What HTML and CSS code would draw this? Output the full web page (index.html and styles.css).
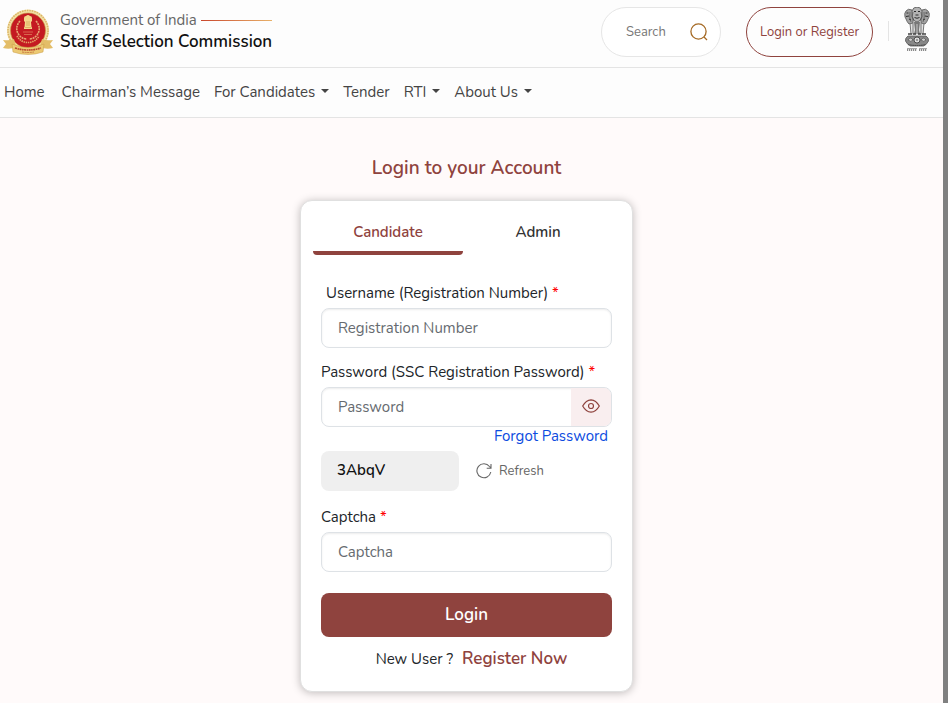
FILE: index.html
```html
<!DOCTYPE html>
<html lang="en">
<head>
<meta charset="utf-8">
<meta name="viewport" content="width=device-width, initial-scale=1">
<title>Staff Selection Commission</title>
<link rel="stylesheet" href="styles.css">
</head>
<body>
<header class="masthead">
  <a class="brand" href="#">
    <svg class="brand-logo" viewBox="0 0 50 46" aria-hidden="true">
      <circle cx="25" cy="21.500" r="21" fill="#f3dfa5"/>
      <circle cx="25" cy="21.500" r="20" fill="none" stroke="#d9b466" stroke-width="1.500" stroke-dasharray="1.500 1"/>
      <circle cx="25" cy="21.500" r="17.500" fill="#c41a22" stroke="#c99a45" stroke-width=".6"/>
      <path d="M14 27a12.500 12.500 0 0 0 22 0" fill="none" stroke="#e2a568" stroke-width="1.600" stroke-dasharray="1.400 .8"/>
      <path d="M17 12q-6 7-1 14 3 4 8 4M33 12q6 7 1 14-3 4-8 4" fill="none" stroke="#e6a874" stroke-width="1.600" stroke-dasharray="2 .7"/>
      <path d="M21 9q0-2 2-2 2-2 4 0 2 0 2 2v3l-1 1 .5 5H29v2h-8v-2h.500l.5-5-1-1z" fill="#f4d58a"/>
      <path d="M24 12v5M26 12v5M21.500 18.500h7" stroke="#cf964a" stroke-width=".6"/>
      <path d="M20 23h10M21 25.500h8" stroke="#dd7a58" stroke-width=".8"/>
      <path d="M0 31q7 1 11-1l2 8q-6 3-13 1l3-4zM50 31q-7 1-11-1l-2 8q6 3 13 1l-3-4z" fill="#e3bd68"/>
      <path d="M9 35q16 7 32 0l-1 8q-15 5-30 0z" fill="#ecca74" stroke="#c99a45" stroke-width=".5"/>
      <path d="M12 39q13 4 26 0" fill="none" stroke="#b8442c" stroke-width="1.600" stroke-dasharray="2 .6 1.500 .5"/>
      <path d="M19 43q6 1 12 0" fill="none" stroke="#c0683a" stroke-width=".8" stroke-dasharray="2 .6"/>
    </svg>
    <span class="brand-text">
      <span class="brand-gov">Government of India <span class="brand-rule"></span></span>
      <strong class="brand-name">Staff Selection Commission</strong>
    </span>
  </a>
  <div class="tools">
    <form class="search" role="search">
      <input class="search-input" type="search" placeholder="Search" aria-label="Search">
      <button class="search-button" type="submit" aria-label="Submit search">
        <svg viewBox="0 0 18 18" width="18" height="18" fill="none" stroke="#a56a25" stroke-width="1.300"><circle cx="8.500" cy="8.500" r="7.600"/><path d="M14 14l3 3"/></svg>
      </button>
    </form>
    <button class="account" type="button">Login or Register</button>
    <span class="divider"></span>
    <svg class="emblem" viewBox="0 0 26 45" role="img" aria-label="National emblem of India">
      <path d="M6 14h14l-1 14H7z" fill="#e2e2e2"/>
      <g fill="#a2a2a2" stroke="#555" stroke-width=".8">
        <path d="M8 3Q4 1 2 4 0 6 1 10l1 2q1 3 3 5l4-1V6zM18 3q4-2 6 1 2 2 1 6l-1 2q-1 3-3 5l-4-1V6z"/>
        <path d="M8 4q1-4 5-4t5 4v6q-2 5-5 5t-5-5z" fill="#b3b3b3"/>
      </g>
      <path d="M10 4.500h2m2 0h2M11.500 8h3M10.500 10.500q2.500 1.500 5 0M2.500 6h2m17 0h2M2 9.500l3-.5m16 0l3 .5M5 12l2 1m12 0l2-1" fill="none" stroke="#2c2c2c"/>
      <path d="M9 5q-2 4 1 9M17 5q2 4-1 9M6 5q-1 5 1 10M20 5q1 5-1 10" fill="none" stroke="#444" stroke-width=".6"/>
      <path d="M6 16l1 11M9 16v11M17 16v11M20 16l-1 11" stroke="#777"/>
      <path d="M10 15h6l-1 8 1 4h-6l1-4z" fill="#777"/>
      <path d="M13 17v10" stroke="#ddd" stroke-width=".8"/>
      <path d="M4 27h4m1 0h3m2 0h3m1 0h4" stroke="#444" stroke-width="1.400"/>
      <path d="M4 29h18q3 2 2.500 5-2 4-5 5h-13q-3-1-5-5Q1 31 4 29z" fill="#888" stroke="#555" stroke-width=".8"/>
      <circle cx="13" cy="33" r="3" fill="#ddd" stroke="#333" stroke-width=".8"/>
      <circle cx="13" cy="33" r=".8" fill="#444"/>
      <path d="M4 33q2-4 5 0-2 3-5 0M17 33q2-4 5 0-2 3-5 0" fill="#ccc" stroke="#555" stroke-width=".8"/>
      <path d="M4 37.500q9 2 18 0" fill="none" stroke="#444" stroke-dasharray="1.500 .7"/>
      <path d="M3 41.600h10m2 0h8" stroke="#888" stroke-width=".8"/>
      <path d="M3 43h10m2 0h8" stroke="#8a8a8a" stroke-width="2" stroke-dasharray="1.200 .8"/>
    </svg>
  </div>
</header>
<nav class="menu" aria-label="Main">
  <a class="menu-link menu-home" href="#">Home</a>
  <a class="menu-link" href="#">Chairman’s Message</a>
  <a class="menu-link menu-drop" href="#">For Candidates</a>
  <a class="menu-link" href="#">Tender</a>
  <a class="menu-link menu-drop" href="#">RTI</a>
  <a class="menu-link menu-drop" href="#">About Us</a>
</nav>
<main class="page">
  <h1 class="title">Login to your Account</h1>
  <section class="card">
    <div class="tabs" role="tablist">
      <button class="tab tab-active" type="button" role="tab" aria-selected="true">Candidate</button>
      <button class="tab" type="button" role="tab" aria-selected="false">Admin</button>
    </div>
    <form class="form">
      <label class="label label-inset" for="username">Username (Registration Number) <span class="required">*</span></label>
      <input class="input" id="username" type="text" placeholder="Registration Number">
      <label class="label" for="password">Password (SSC Registration Password) <span class="required">*</span></label>
      <div class="password">
        <input class="password-input" id="password" type="password" placeholder="Password">
        <button class="reveal" type="button" aria-label="Show password">
          <svg viewBox="0 0 18 14" width="18" height="14" fill="none" stroke="#8f433e" stroke-width="1.200"><path d="M.7 7Q4 1 9 .8 14 1 17.300 7 14 13 9 13.200 4 13 .7 7z"/><circle cx="9" cy="7" r="2.500"/></svg>
        </button>
      </div>
      <a class="forgot" href="#">Forgot Password</a>
      <div class="captcha">
        <span class="captcha-code">3AbqV</span>
        <button class="refresh" type="button">
          <svg viewBox="0 0 16 16" width="16" height="16" fill="none" stroke="#666" stroke-width="1.100"><path d="M14.800 9A7 7 0 1 1 13.500 3.500L15 5.200M15 1v4.300h-4.300"/></svg>
          Refresh
        </button>
      </div>
      <label class="label" for="captcha">Captcha <span class="required">*</span></label>
      <input class="input" id="captcha" type="text" placeholder="Captcha">
      <button class="submit" type="submit">Login</button>
      <p class="signup">New User ? <a class="signup-link" href="#">Register Now</a></p>
    </form>
  </section>
</main>
</body>
</html>
```
FILE: styles.css
```css
* { box-sizing: border-box; }

body {
  margin: 0;
  min-height: 100vh;
  border-right: 5px solid #808080;
  background: #fffafa;
  color: #212529;
  font: 15px/20px Nunito, Lato, sans-serif;
}

a { color: inherit; text-decoration: none; }
button, input { font: inherit; color: inherit; }
button { padding: 0; border: 0; background: none; cursor: pointer; }
svg { display: block; flex: none; }

.masthead {
  display: flex;
  justify-content: space-between;
  height: 68px;
  padding: 7px 13px 0 3px;
  border-bottom: 1px solid #e4e4e4;
  background: #fdfdfd;
}

.brand { display: flex; gap: 7px; }
.brand-logo { width: 50px; height: 46px; margin-top: 2px; }
.brand-text { display: flex; flex-direction: column; padding-top: 3px; }
.brand-gov { display: flex; gap: 4px; color: #666; }
.brand-rule { flex: 1; height: 1px; margin-top: 10px; background: linear-gradient(90deg, #c9472c, #e8b26a); }
.brand-name { color: #111; font-size: 17px; line-height: 24px; font-weight: 600; }

.tools { display: flex; align-items: flex-start; }
.search {
  display: flex;
  align-items: center;
  width: 120px;
  height: 50px;
  margin-right: 25px;
  padding: 0 12px 0 24px;
  border: 1px solid #e6e6e6;
  border-radius: 25px;
  background: #fff;
}
.search-input { flex: 1; min-width: 0; padding: 0; border: 0; outline: 0; background: none; font-size: 13px; }
.search-input::placeholder { color: #777; opacity: 1; }
.account {
  width: 127px;
  height: 50px;
  border: 1px solid #8f433e;
  border-radius: 25px;
  color: #8f433e;
  font-size: 13px;
}
.divider { width: 1px; height: 20px; margin: 14px 15px 0; background: #e4e4e4; }
.emblem { width: 26px; height: 45px; }

.menu {
  display: flex;
  align-items: center;
  gap: 14px;
  height: 50px;
  padding: 0 4px 1px;
  border-bottom: 1px solid #e4e4e4;
  background: #fdfdfd;
  color: #444;
}
.menu-home { margin-right: 3px; }
.menu-drop::after {
  content: "";
  display: inline-block;
  margin-left: 6px;
  vertical-align: 4px;
  border: 4px solid transparent;
  border-top-color: currentColor;
  border-bottom: 0;
}

.page { padding: 38px 10px 10px 0; }
.title { margin: 0 0 20px; color: #8f433e; font-size: 19px; line-height: 24px; font-weight: 600; text-align: center; }

.card {
  max-width: 333px;
  margin: 0 auto;
  padding: 11px 12px 22px;
  border: 1px solid #e0e0e0;
  border-radius: 12px;
  background: #fff;
  box-shadow: 0 1px 8px rgba(0, 0, 0, .25);
}
.tabs { display: flex; }
.tab { width: 150px; height: 43px; border-bottom: 4px solid transparent; border-radius: 4px; color: #333; font-weight: 600; }
.tab-active { border-color: #8f433e; color: #8f433e; }

.form { display: flex; flex-direction: column; margin: 28px 8px 0; }
.label { margin-bottom: 5px; }
.label-inset { padding-left: 5px; }
.required { color: #f00; }
.input, .password {
  width: 100%;
  height: 40px;
  margin-bottom: 14px;
  border: 1px solid #dee2e6;
  border-radius: 8px;
  background: #fff;
  box-shadow: inset 0 1px 2px rgba(0, 0, 0, .08);
}
.input { padding: 0 16px 1px; }
.input::placeholder, .password-input::placeholder { color: #666b70; opacity: 1; }
.password { display: flex; margin-bottom: 0; overflow: hidden; }
.password-input { flex: 1; min-width: 0; padding: 0 16px 1px; border: 0; background: none; }
.reveal { display: flex; align-items: center; justify-content: center; width: 40px; padding-bottom: 2px; background: #f9eeef; }
.forgot { align-self: flex-end; margin: 0 4px 6px; color: #0d4ce0; line-height: 18px; }

.captcha { display: flex; gap: 17px; margin-bottom: 16px; }
.captcha-code { width: 138px; padding: 9px 16px 11px; border-radius: 8px; background: #efefef; color: #111; font-weight: 600; }
.refresh { display: flex; align-items: center; gap: 7px; color: #666; font-size: 13px; }

.submit { height: 44px; margin-top: 7px; border-radius: 8px; background: #8f433e; color: #fff; font-size: 17px; font-weight: 600; }
.signup { margin: 12px 0 0; padding-left: 10px; text-align: center; }
.signup-link { margin-left: 5px; color: #8f433e; font-size: 17px; font-weight: 600; }
```
